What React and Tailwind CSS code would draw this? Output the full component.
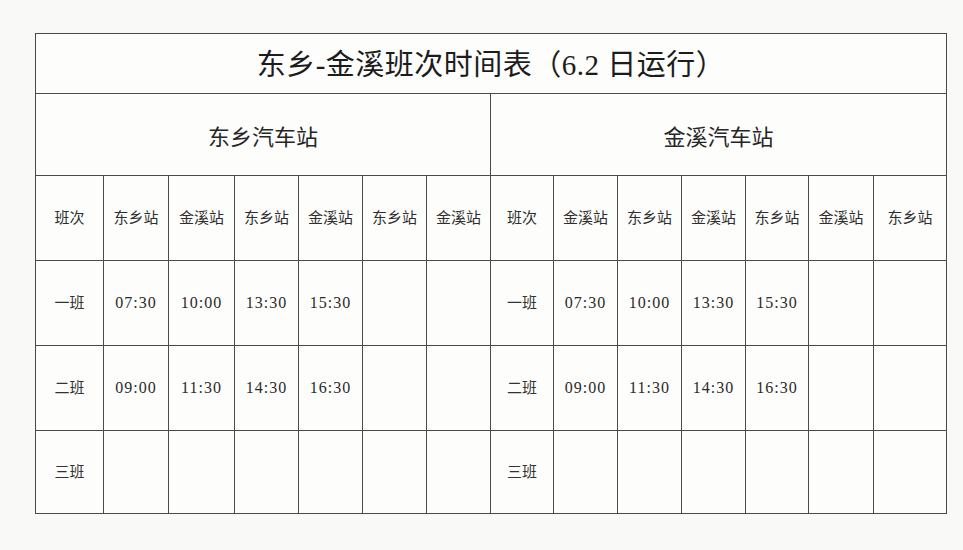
import React from 'react'

const serif = { fontFamily: '"Liberation Serif", "Noto Sans CJK SC", serif' }

const leftCols = [68, 65, 66, 64, 64, 64, 64]
const rightCols = [63, 64, 64, 64, 63, 65, 73]

const leftHead = ['班次', '东乡站', '金溪站', '东乡站', '金溪站', '东乡站', '金溪站']
const rightHead = ['班次', '金溪站', '东乡站', '金溪站', '东乡站', '金溪站', '东乡站']

const rows = [
  { label: '一班', times: ['07:30', '10:00', '13:30', '15:30', '', ''], h: 'h-[85px]' },
  { label: '二班', times: ['09:00', '11:30', '14:30', '16:30', '', ''], h: 'h-[85px]' },
  { label: '三班', times: ['', '', '', '', '', ''], h: 'h-[83px]' },
]

const cell = 'border border-[#4a4a4a] text-center align-middle p-0'

const App = () => {
  return (
    <div className="w-[963px] h-[550px] bg-[#f9f9f8] pt-[33px] pl-[35px]" style={serif}>
      <table className="border-collapse bg-[#fdfdfc] table-fixed w-[911px]">
        <colgroup>
          {[...leftCols, ...rightCols].map((w, i) => (
            <col key={i} style={{ width: w }} />
          ))}
        </colgroup>
        <tbody>
          <tr className="h-[60px]">
            <td colSpan={14} className={cell + ' pt-[5px]'}>
              <span className="text-[29px] text-[#1c1c1c] tracking-[0.5px]">东乡-金溪班次时间表（6.2 日运行）</span>
            </td>
          </tr>
          <tr className="h-[82px]">
            <td colSpan={7} className={cell + ' pt-[6px]'}>
              <span className="text-[22px] text-[#262626]">东乡汽车站</span>
            </td>
            <td colSpan={7} className={cell + ' pt-[6px]'}>
              <span className="text-[22px] text-[#262626]">金溪汽车站</span>
            </td>
          </tr>
          <tr className="h-[85px]">
            {[...leftHead, ...rightHead].map((t, i) => (
              <td key={i} className={cell}>
                <span className="text-[15px] text-[#2e2e2e]">{t}</span>
              </td>
            ))}
          </tr>
          {rows.map((r) => (
            <tr key={r.label} className={r.h}>
              {[0, 1].map((half) => (
                <React.Fragment key={half}>
                  <td className={cell}>
                    <span className="text-[15px] text-[#333]">{r.label}</span>
                  </td>
                  {r.times.map((t, i) => (
                    <td key={i} className={cell}>
                      <span className="text-[16px] text-[#2a2a2a] tracking-[1px]">{t}</span>
                    </td>
                  ))}
                </React.Fragment>
              ))}
            </tr>
          ))}
        </tbody>
      </table>
    </div>
  )
}

export default App
